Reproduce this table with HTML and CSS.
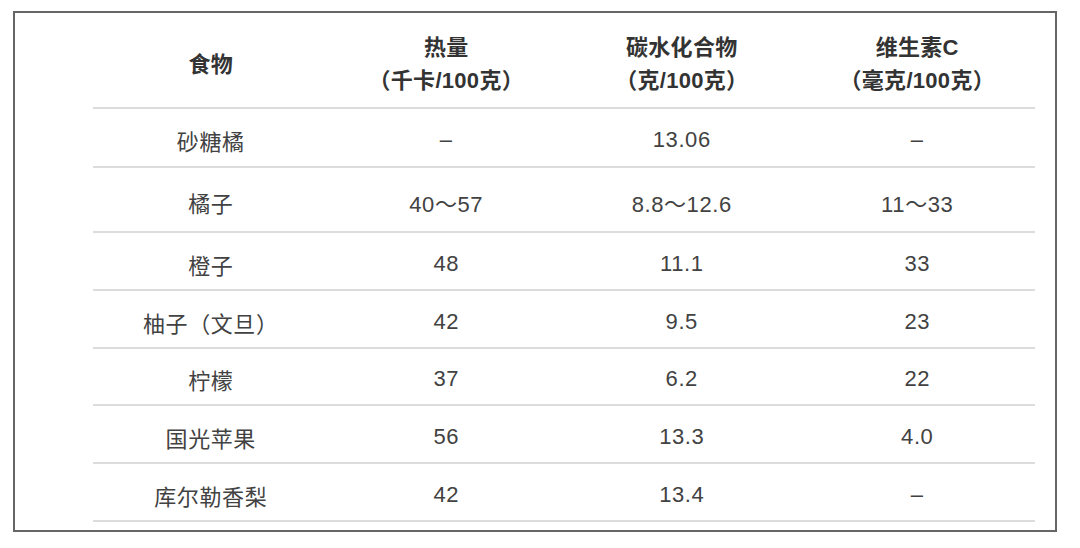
FILE: index.html
```html
<!DOCTYPE html>
<html lang="zh-CN">
<head>
<meta charset="utf-8">
<link rel="stylesheet" href="styles.css">
</head>
<body>
<div class="frame">
  <div class="table">
    <div class="row head">
      <div class="cell">食物</div>
      <div class="cell">热量<br>（千卡/100克）</div>
      <div class="cell">碳水化合物<br>（克/100克）</div>
      <div class="cell">维生素C<br>（毫克/100克）</div>
    </div>
    <div class="row r1">
      <div class="cell">砂糖橘</div>
      <div class="cell">–</div>
      <div class="cell">13.06</div>
      <div class="cell">–</div>
    </div>
    <div class="row r2">
      <div class="cell">橘子</div>
      <div class="cell">40～57</div>
      <div class="cell">8.8～12.6</div>
      <div class="cell">11～33</div>
    </div>
    <div class="row">
      <div class="cell">橙子</div>
      <div class="cell">48</div>
      <div class="cell">11.1</div>
      <div class="cell">33</div>
    </div>
    <div class="row">
      <div class="cell">柚子（文旦）</div>
      <div class="cell">42</div>
      <div class="cell">9.5</div>
      <div class="cell">23</div>
    </div>
    <div class="row r5">
      <div class="cell">柠檬</div>
      <div class="cell">37</div>
      <div class="cell">6.2</div>
      <div class="cell">22</div>
    </div>
    <div class="row">
      <div class="cell">国光苹果</div>
      <div class="cell">56</div>
      <div class="cell">13.3</div>
      <div class="cell">4.0</div>
    </div>
    <div class="row">
      <div class="cell">库尔勒香梨</div>
      <div class="cell">42</div>
      <div class="cell">13.4</div>
      <div class="cell">–</div>
    </div>
  </div>
</div>
</body>
</html>
```
FILE: styles.css
```css
html, body {
  margin: 0;
  padding: 0;
  background: #ffffff;
}
body {
  font-family: "Liberation Sans", "Noto Sans CJK SC", sans-serif;
  color: #424242;
  font-size: 22px;
  letter-spacing: 0.6px;
}
.frame {
  margin: 11px 0 0 13px;
  width: 942px;
  height: 517px;
  border: 2px solid #666666;
  padding: 0 20px 0 78px;
  box-sizing: content-box;
}
.table {
  display: flex;
  flex-direction: column;
}
.row {
  display: grid;
  grid-template-columns: repeat(4, 1fr);
  border-bottom: 2px solid #dcdcdc;
  height: 56px;
}
.cell {
  display: flex;
  align-items: center;
  justify-content: center;
  text-align: center;
  padding-top: 5px;
  box-sizing: border-box;
}
.head {
  height: 94px;
  font-weight: bold;
  color: #333333;
  line-height: 33px;
  letter-spacing: 0.3px;
}
.head .cell {
  padding-top: 8px;
}
.r1 {
  height: 57px;
}
.r2 {
  height: 63px;
}
.r5 {
  height: 55px;
}
```
